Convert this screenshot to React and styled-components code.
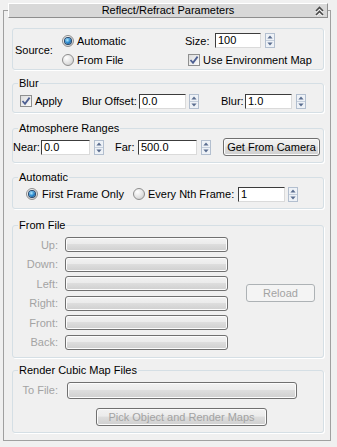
import React from 'react';
import styled, { createGlobalStyle } from 'styled-components';

const GlobalStyle = createGlobalStyle`
  body {
    margin: 0;
    background: #f0f0f0;
    font-family: "Liberation Sans", Arial, sans-serif;
    font-size: 11px;
    color: #000;
  }
`;

const Rollout = styled.fieldset`
  box-sizing: border-box;
  width: 328px;
  margin: 3px 0 0 3px;
  padding: 0 2px 7px 4px;
  border: 1px solid #a0a0a0;
  min-inline-size: 0;
`;

const TitleBar = styled.legend`
  box-sizing: border-box;
  width: 320px;
  height: 15px;
  padding: 0;
  background: #d8d8d8;
  border-top: 1px solid #fff;
  border-left: 1px solid #fff;
  border-bottom: 1px solid #8e8e8e;
  border-right: 1px solid #8e8e8e;
`;

const TitleInner = styled.div`
  display: grid;
  grid-template-columns: 20px 1fr 20px;
  align-items: center;
  height: 13px;
  line-height: 13px;
  text-align: center;
`;

const Chevron = styled.svg`
  justify-self: end;
  margin-right: 3px;
`;

const Group = styled.fieldset`
  margin: ${(p) => p.$mt}px 4px 0;
  padding: ${(p) => p.$pad || '0'};
  border: 1px solid #d5dfe5;
  border-radius: 3px;
  box-shadow: 1px 1px 0 #fff;
  min-inline-size: 0;
`;

const GroupTitle = styled.legend`
  margin-left: 5px;
  padding: 0 1px;
  line-height: 13px;
`;

const SourceGrid = styled.div`
  display: grid;
  grid-template-columns: 47px 123px auto;
  grid-template-rows: 19px 19px;
  align-items: center;
  padding-left: 2px;
`;

const SourceLabel = styled.span`
  grid-row: 1 / span 2;
`;

const Row = styled.div`
  display: flex;
  align-items: center;
  height: ${(p) => p.$h}px;
  padding-left: ${(p) => p.$pl || 0}px;
  margin-top: ${(p) => p.$mt || 0}px;
`;

const Label = styled.span`
  flex: none;
  width: ${(p) => (p.$w ? `${p.$w}px` : 'auto')};
  margin-left: ${(p) => p.$ml || 0}px;
  white-space: nowrap;
  color: ${(p) => (p.$disabled ? '#a3a3a3' : '#000')};
  text-align: ${(p) => (p.$right ? 'right' : 'left')};
`;

const Field = styled.div`
  box-sizing: border-box;
  flex: none;
  width: ${(p) => p.$w}px;
  height: 15px;
  padding-left: 2px;
  line-height: 13px;
  background: #fff;
  border: 1px solid;
  border-color: #3c3c3c #dadada #dadada #3c3c3c;
`;

const SpinBox = styled.svg`
  flex: none;
  margin-left: ${(p) => p.$ml}px;
`;

const Spinner = ({ ml = 3 }) => (
  <SpinBox $ml={ml} width="10" height="15" viewBox="0 0 10 15">
    <rect x="0.5" y="0.5" width="9" height="14" fill="#eef2f7" stroke="#b3bfcf" />
    <line x1="1" y1="7.5" x2="9" y2="7.5" stroke="#c4cedb" />
    <path d="M5 2.5 L7.6 5.6 H2.4 Z" fill="#5a6d8f" />
    <path d="M5 12.5 L7.6 9.4 H2.4 Z" fill="#5a6d8f" />
  </SpinBox>
);

const Option = styled.span`
  display: flex;
  align-items: center;
  flex: none;
  width: ${(p) => (p.$w ? `${p.$w}px` : 'auto')};
  margin-left: ${(p) => p.$ml || 0}px;
  gap: ${(p) => p.$gap || 3}px;
  white-space: nowrap;
`;

const RadioDot = styled.span`
  position: relative;
  box-sizing: border-box;
  flex: none;
  width: 12px;
  height: 12px;
  border-radius: 50%;
  border: 1px solid #8d8d8d;
  background: radial-gradient(circle at 35% 30%, #ffffff, #e2e2e2 55%, #c4c4c4);
  &::after {
    content: '';
    display: ${(p) => (p.$on ? 'block' : 'none')};
    position: absolute;
    left: 2px;
    top: 2px;
    width: 6px;
    height: 6px;
    border-radius: 50%;
    background: radial-gradient(circle at 40% 35%, #b5ecff, #2a8ad0 50%, #0b3f73);
    box-shadow: 0 0 0 1px #24456a;
  }
`;

const CheckFrame = styled.span`
  box-sizing: border-box;
  display: flex;
  flex: none;
  width: 12px;
  height: 12px;
  border: 1px solid #8e8f8f;
  background: linear-gradient(135deg, #dcdcdc, #fbfbfb);
`;

const Check = () => (
  <CheckFrame>
    <svg width="10" height="10" viewBox="0 0 10 10">
      <path d="M1.5 5 L4 7.8 L8.6 1.6" fill="none" stroke="#4d5f92" strokeWidth="1.8" />
    </svg>
  </CheckFrame>
);

const Button = styled.button`
  box-sizing: border-box;
  flex: none;
  width: ${(p) => p.$w}px;
  height: ${(p) => p.$h || 18}px;
  margin-left: ${(p) => p.$ml || 0}px;
  padding: 0;
  font-family: "Liberation Sans", Arial, sans-serif;
  font-size: 11px;
  line-height: 14px;
  border-radius: 3px;
  color: ${(p) => (p.$disabled ? '#a3a3a3' : '#000')};
  border: 1px solid ${(p) => (p.$flat ? '#adb2b5' : '#707070')};
  background: ${(p) =>
    p.$flat
      ? '#f4f4f4'
      : 'linear-gradient(#f2f2f2 0%, #ebebeb 45%, #dddddd 50%, #cfcfcf 100%)'};
  box-shadow: ${(p) => (p.$flat ? 'none' : 'inset 0 0 0 1px #fcfcfc')};
`;

const FileGrid = styled.div`
  display: grid;
  grid-template-columns: 45px 163px 1fr;
  column-gap: 7px;
  grid-auto-rows: 15px;
  row-gap: 4.5px;
  align-items: center;
  padding: 5px 0 7px;
`;

const Reload = styled(Button)`
  grid-column: 3;
  grid-row: 1 / span 6;
  align-self: center;
  justify-self: start;
  margin-left: 11px;
`;

const sides = ['Up:', 'Down:', 'Left:', 'Right:', 'Front:', 'Back:'];

export default function App() {
  return (
    <>
      <GlobalStyle />
      <Rollout>
        <TitleBar>
          <TitleInner>
            <span />
            <span>Reflect/Refract Parameters</span>
            <Chevron width="9" height="10" viewBox="0 0 9 10">
              <path d="M1 5 L4.5 1.5 L8 5" fill="none" stroke="#fff" strokeWidth="1.6" transform="translate(0 1)" />
              <path d="M1 9 L4.5 5.5 L8 9" fill="none" stroke="#fff" strokeWidth="1.6" transform="translate(0 1)" />
              <path d="M1 5 L4.5 1.5 L8 5" fill="none" stroke="#4a4a4a" strokeWidth="1.6" />
              <path d="M1 9 L4.5 5.5 L8 9" fill="none" stroke="#4a4a4a" strokeWidth="1.6" />
            </Chevron>
          </TitleInner>
        </TitleBar>

        <Group $mt={10} $pad="2px 0 0">
          <SourceGrid>
            <SourceLabel>Source:</SourceLabel>
            <Option>
              <RadioDot $on />
              Automatic
            </Option>
            <Row $h={19}>
              <Label $w={30}>Size:</Label>
              <Field $w={46}>100</Field>
              <Spinner ml={4} />
            </Row>
            <Option>
              <RadioDot />
              From File
            </Option>
            <Option $ml={3}>
              <Check />
              Use Environment Map
            </Option>
          </SourceGrid>
        </Group>

        <Group $mt={7} $pad="3px 0 3px">
          <GroupTitle>Blur</GroupTitle>
          <Row $h={16} $pl={7}>
            <Option $w={62}>
              <Check />
              Apply
            </Option>
            <Label $w={57}>Blur Offset:</Label>
            <Field $w={47}>0.0</Field>
            <Spinner ml={3} />
            <Label $w={24} $ml={22}>Blur:</Label>
            <Field $w={47}>1.0</Field>
            <Spinner ml={4} />
          </Row>
        </Group>

        <Group $mt={9} $pad="3px 0 6px">
          <GroupTitle>Atmosphere Ranges</GroupTitle>
          <Row $h={18}>
            <Label $w={28}>Near:</Label>
            <Field $w={49}>0.0</Field>
            <Spinner ml={4} />
            <Label $w={23} $ml={11}>Far:</Label>
            <Field $w={59}>500.0</Field>
            <Spinner ml={4} />
            <Button $w={97} $ml={12}>Get From Camera</Button>
          </Row>
        </Group>

        <Group $mt={8} $pad="2px 0 6px">
          <GroupTitle>Automatic</GroupTitle>
          <Row $h={16} $pl={13}>
            <Option $w={107} $gap={4}>
              <RadioDot $on />
              First Frame Only
            </Option>
            <Option $w={105} $gap={3}>
              <RadioDot />
              Every Nth Frame:
            </Option>
            <Field $w={47}>1</Field>
            <Spinner ml={3} />
          </Row>
        </Group>

        <Group $mt={10}>
          <GroupTitle>From File</GroupTitle>
          <FileGrid>
            {sides.map((s, i) => (
              <React.Fragment key={s}>
                <Label $disabled $right style={{ gridRow: i + 1 }}>{s}</Label>
                <Button $w={163} $h={15} style={{ gridRow: i + 1 }} />
              </React.Fragment>
            ))}
            <Reload $w={69} $flat $disabled>Reload</Reload>
          </FileGrid>
        </Group>

        <Group $mt={6} $pad="5px 0 6px">
          <GroupTitle>Render Cubic Map Files</GroupTitle>
          <Row $h={17}>
            <Label $w={45} $disabled $right>To File:</Label>
            <Button $w={230} $h={17} $ml={9} />
          </Row>
          <Row $h={18} $mt={9}>
            <Button $w={171} $ml={83} $disabled>Pick Object and Render Maps</Button>
          </Row>
        </Group>
      </Rollout>
    </>
  );
}
